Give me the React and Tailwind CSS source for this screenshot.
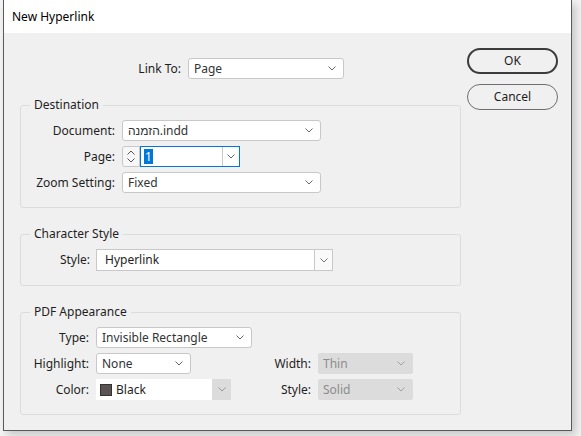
import React from "react";

const Chevron = ({ className = "text-[#555]" }) => (
  <svg width="8" height="5" viewBox="0 0 8 5" className={className}>
    <path d="M0.5 0.5 L4 4 L7.5 0.5" fill="none" stroke="currentColor" strokeWidth="1" />
  </svg>
);

function Select({ w, value, disabled }) {
  return (
    <div
      className={
        disabled
          ? `flex items-center h-[21px] ${w} rounded-[2px] bg-[#dcdcdc] pl-[5px] pr-[8px] text-[#8c8c8c]`
          : `flex items-center h-[21px] ${w} rounded-[3px] border border-[#c8c8c8] bg-white pl-[5px] pr-[7px] text-[#333]`
      }
    >
      <span className="flex-1 truncate">{value}</span>
      <Chevron className={disabled ? "text-[#a0a0a0]" : "text-[#666]"} />
    </div>
  );
}

function Label({ w, children }) {
  return <div className={`${w} shrink-0 text-right text-[#1e1e1e]`}>{children}</div>;
}

function Group({ title, children, className }) {
  return (
    <fieldset className={`border border-[#dcdcdc] rounded-[3px] mx-0 px-0 ${className}`}>
      <legend className="ml-[9px] px-[4px] leading-[16px] text-[#1e1e1e]">{title}</legend>
      {children}
    </fieldset>
  );
}

export default function App() {
  return (
    <div className="w-[581px] h-[436px] bg-[#f3f3f3] font-['Noto_Sans',sans-serif] text-[12px] leading-[16px] overflow-hidden">
      <div className="ml-[3px] w-[569px] h-[431px] border-x border-b border-[#5a5a5a] shadow-[4px_4px_8px_rgba(0,0,0,0.18)] flex flex-col bg-[#f0f0f0]">
        <div className="h-[33px] bg-white flex items-center pl-[8px] text-black shrink-0">New Hyperlink</div>
        <div className="flex pl-[16px] pt-[15px]">
          <div className="w-[441px] shrink-0">
            <div className="flex items-center gap-[7px] mt-[10px]">
              <Label w="w-[161px]">Link To:</Label>
              <Select w="w-[156px]" value="Page" />
            </div>

            <Group title="Destination" className="mt-[18px] pt-[7px] pb-[14px]">
              <div className="flex flex-col gap-[5px]">
                <div className="flex items-center gap-[7px]">
                  <Label w="w-[94px]">Document:</Label>
                  <Select w="w-[199px]" value={<span><span dir="rtl">הזמנה</span>.indd</span>} />
                </div>
                <div className="flex items-center gap-[7px]">
                  <Label w="w-[94px]">Page:</Label>
                  <div className="flex h-[21px]">
                    <div className="w-[18px] border border-[#c8c8c8] rounded-l-[3px] bg-[#f7f7f7] flex flex-col items-center justify-center gap-[3px] text-[#555]">
                      <svg width="8" height="5" viewBox="0 0 8 5"><path d="M0.5 4.5 L4 1 L7.5 4.5" fill="none" stroke="currentColor" /></svg>
                      <svg width="8" height="5" viewBox="0 0 8 5"><path d="M0.5 0.5 L4 4 L7.5 0.5" fill="none" stroke="currentColor" /></svg>
                    </div>
                    <div className="w-[100px] border border-[#0078d7] bg-white flex items-center">
                      <div className="flex-1 pl-[3px] flex items-center">
                        <span className="bg-[#0078d7] text-white px-[1px] leading-[15px]">1</span>
                      </div>
                      <div className="w-[17px] h-full border-l border-[#c8c8c8] flex items-center justify-center">
                        <Chevron className="text-[#666]" />
                      </div>
                    </div>
                  </div>
                </div>
                <div className="flex items-center gap-[7px]">
                  <Label w="w-[94px]">Zoom Setting:</Label>
                  <Select w="w-[199px]" value="Fixed" />
                </div>
              </div>
            </Group>

            <Group title="Character Style" className="mt-[18px] pt-[7px] pb-[14px]">
              <div className="flex items-center gap-[6px]">
                <Label w="w-[69px]">Style:</Label>
                <div className="flex h-[22px] w-[237px] border border-[#c8c8c8] bg-white">
                  <div className="flex-1 flex items-center pl-[8px] text-[#1e1e1e]">Hyperlink</div>
                  <div className="w-[18px] border-l border-[#c8c8c8] bg-[#fafafa] flex items-center justify-center">
                    <Chevron className="text-[#777]" />
                  </div>
                </div>
              </div>
            </Group>

            <Group title="PDF Appearance" className="mt-[18px] pt-[7px] pb-[14px]">
              <div className="flex flex-col gap-[5px]">
                <div className="flex items-center gap-[7px]">
                  <Label w="w-[68px]">Type:</Label>
                  <Select w="w-[156px]" value="Invisible Rectangle" />
                </div>
                <div className="flex items-center">
                  <Label w="w-[68px]">Highlight:</Label>
                  <div className="ml-[7px]"><Select w="w-[95px]" value="None" /></div>
                  <Label w="w-[120px]">Width:</Label>
                  <div className="ml-[7px]"><Select w="w-[95px]" value="Thin" disabled /></div>
                </div>
                <div className="flex items-center">
                  <Label w="w-[68px]">Color:</Label>
                  <div className="ml-[7px] flex h-[21px] w-[135px]">
                    <div className="flex-1 bg-white flex items-center pl-[4px] gap-[4px] text-[#1e1e1e]">
                      <span className="w-[12px] h-[12px] bg-[#5b5353] border border-[#333]" />
                      <span>Black</span>
                    </div>
                    <div className="w-[19px] bg-[#dcdcdc] flex items-center justify-center">
                      <Chevron className="text-[#999]" />
                    </div>
                  </div>
                  <Label w="w-[80px]">Style:</Label>
                  <div className="ml-[7px]"><Select w="w-[95px]" value="Solid" disabled /></div>
                </div>
              </div>
            </Group>
          </div>

          <div className="ml-[6px] flex flex-col gap-[10px]">
            <button className="w-[91px] h-[26px] rounded-full border-2 border-[#3c3c3c] bg-[#f0f0f0] text-[#1e1e1e] flex items-center justify-center">OK</button>
            <button className="w-[91px] h-[26px] rounded-full border border-[#6e6e6e] bg-[#f0f0f0] text-[#1e1e1e] flex items-center justify-center">Cancel</button>
          </div>
        </div>
      </div>
    </div>
  );
}
